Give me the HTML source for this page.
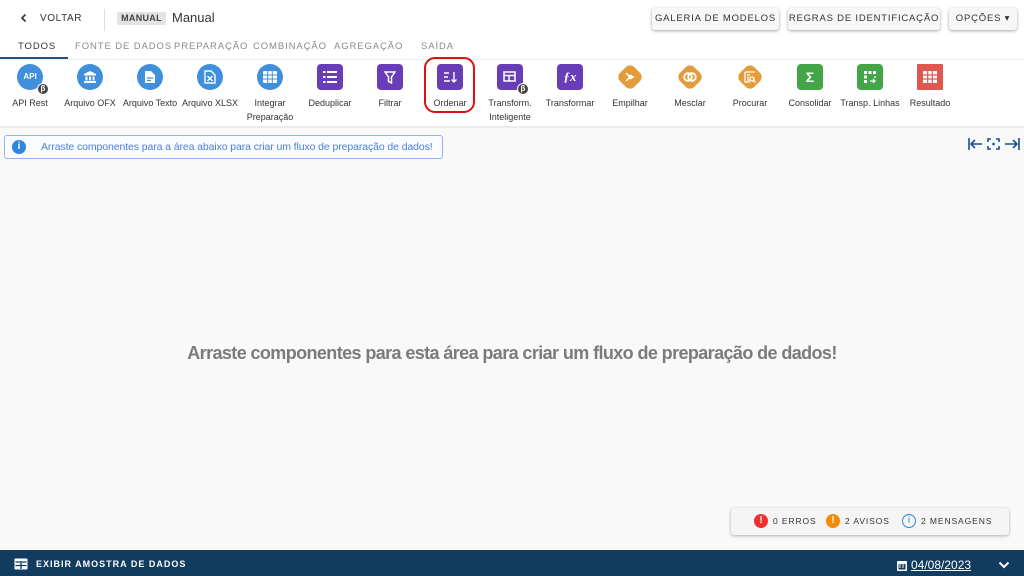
<!DOCTYPE html>
<html><head><meta charset="utf-8"><style>
*{margin:0;padding:0;box-sizing:border-box}
body{width:1024px;height:576px;overflow:hidden;background:#f9f9f9;font-family:"Liberation Sans",sans-serif;position:relative;color:#333}
.top{position:absolute;left:0;top:0;width:1024px;height:128px;background:#fff;border-bottom:2px solid #ececec}
.abs{position:absolute;white-space:nowrap}
.btn{position:absolute;top:8px;height:22px;background:#f7f7f7;box-shadow:0 1px 3px rgba(0,0,0,.35);border-radius:3px;font-size:9.5px;letter-spacing:.8px;color:#333;line-height:22px;text-align:center;white-space:nowrap}
.tab{position:absolute;top:41px;font-size:9.5px;letter-spacing:.9px;color:#8a8a8a;white-space:nowrap}
.it{position:absolute;top:63px;width:70px;margin-left:-35px;text-align:center;font-size:9px;color:#333;line-height:14px;white-space:nowrap}
.ic{width:26px;height:26px;margin:1px auto 6px;position:relative;display:flex;align-items:center;justify-content:center;color:#fff;font-weight:bold;font-size:12px}
.b{background:#3f8fdc;border-radius:50%}
.p{background:#6a3db8;border-radius:4px}
.g{background:#44a548;border-radius:4px}
.r{background:#e0574f;border-radius:1px}
.o{background:transparent}
.o:before{content:"";position:absolute;left:3px;top:3px;width:20px;height:20px;background:#e49c3a;border-radius:6px;transform:rotate(45deg)}
.o svg{position:relative}
.beta{position:absolute;right:-6px;bottom:-5px;width:12px;height:12px;border-radius:50%;background:#444;border:1px solid #fff;font-size:8px;line-height:10px;color:#fff;text-align:center;font-weight:bold}
</style></head><body>
<div class="top">
 <svg class="abs" style="left:19px;top:13px" width="10" height="10" viewBox="0 0 10 10"><path d="M6.5 1.5L3 5l3.5 3.5" stroke="#333" stroke-width="1.6" fill="none"/></svg>
 <div class="abs" style="left:40px;top:13px;font-size:10px;letter-spacing:.6px;color:#333">VOLTAR</div>
 <div class="abs" style="left:104px;top:9px;width:1px;height:22px;background:#ddd"></div>
 <div class="abs" style="left:117px;top:12px;width:49px;height:13px;background:#e3e3e3;border-radius:2px;font-size:9px;font-weight:bold;color:#444;text-align:center;line-height:13px;letter-spacing:.3px">MANUAL</div>
 <div class="abs" style="left:172px;top:10px;font-size:13px;color:#333">Manual</div>
 <div class="btn" style="left:652px;width:127px">GALERIA DE MODELOS</div>
 <div class="btn" style="left:788px;width:152px">REGRAS DE IDENTIFICAÇÃO</div>
 <div class="btn" style="left:949px;width:68px">OPÇÕES ▾</div>
 <div class="tab" style="left:18px;color:#333">TODOS</div>
 <div class="abs" style="left:0;top:57px;width:68px;height:2px;background:#2a4f7a"></div>
 <div class="tab" style="left:75px">FONTE DE DADOS</div>
 <div class="tab" style="left:174px">PREPARAÇÃO</div>
 <div class="tab" style="left:253px">COMBINAÇÃO</div>
 <div class="tab" style="left:334px">AGREGAÇÃO</div>
 <div class="tab" style="left:421px">SAÍDA</div>
 <div class="abs" style="left:0;top:59px;width:1024px;height:1px;background:#eee"></div>

 <div class="it" style="left:30px"><div class="ic b" style="font-size:8px">API<span class="beta">β</span></div>API Rest</div>
 <div class="it" style="left:90px"><div class="ic b"><svg width="14" height="14" viewBox="0 0 14 14" fill="#fff"><path d="M7 1L1 4v1.5h12V4z"/><rect x="2.5" y="6.5" width="2" height="4"/><rect x="6" y="6.5" width="2" height="4"/><rect x="9.5" y="6.5" width="2" height="4"/><rect x="1" y="11" width="12" height="2"/></svg></div>Arquivo OFX</div>
 <div class="it" style="left:150px"><div class="ic b"><svg width="12" height="14" viewBox="0 0 12 14"><path d="M1 1h6l4 4v8H1z" fill="#fff"/><path d="M3 8h6M3 10.5h4" stroke="#3f8fdc" stroke-width="1.3"/></svg></div>Arquivo Texto</div>
 <div class="it" style="left:210px"><div class="ic b"><svg width="12" height="14" viewBox="0 0 12 14"><path d="M1 1h6l4 4v8H1z" fill="none" stroke="#fff" stroke-width="1.4"/><path d="M3.5 6l5 5M8.5 6l-5 5" stroke="#fff" stroke-width="1.4"/></svg></div>Arquivo XLSX</div>
 <div class="it" style="left:270px"><div class="ic b"><svg width="14" height="12" viewBox="0 0 14 12" fill="#fff"><rect x="0" y="0" width="14" height="12" rx="1"/><path d="M0 4h14M0 8h14M4.7 0v12M9.3 0v12" stroke="#3f8fdc" stroke-width="1"/></svg></div>Integrar<br>Preparação</div>
 <div class="it" style="left:330px"><div class="ic p"><svg width="14" height="12" viewBox="0 0 14 12" fill="#fff"><rect x="0" y="0" width="2.5" height="2"/><rect x="4" y="0" width="10" height="2"/><rect x="0" y="5" width="2.5" height="2"/><rect x="4" y="5" width="10" height="2"/><rect x="0" y="10" width="2.5" height="2"/><rect x="4" y="10" width="10" height="2"/></svg></div>Deduplicar</div>
 <div class="it" style="left:390px"><div class="ic p"><svg width="12" height="13" viewBox="0 0 12 13"><path d="M1 1h10L7.5 6v6l-3-1.5V6z" fill="none" stroke="#fff" stroke-width="1.5"/></svg></div>Filtrar</div>
 <div class="it" style="left:450px"><div class="ic p"><svg width="14" height="12" viewBox="0 0 14 12" fill="none" stroke="#fff" stroke-width="1.4"><path d="M1 2h5M1 6h4M1 10h6M11 1v10M8.5 8.5L11 11l2.5-2.5"/></svg></div>Ordenar</div>
 <div class="abs" style="left:424px;top:57px;width:51px;height:56px;border:2px solid #e01010;border-radius:11px"></div>
 <div class="it" style="left:510px"><div class="ic p"><svg width="14" height="12" viewBox="0 0 14 12" fill="none" stroke="#fff" stroke-width="1.5"><rect x="1" y="1" width="11" height="9"/><path d="M1 4.5h11M6 4.5V10"/></svg><span class="beta">β</span></div>Transform.<br>Inteligente</div>
 <div class="it" style="left:570px"><div class="ic p" style="font-style:italic;font-family:'Liberation Serif',serif;font-size:13px">ƒx</div>Transformar</div>
 <div class="it" style="left:630px"><div class="ic o"><svg width="12" height="12" viewBox="0 0 12 12" fill="none" stroke="#fff" stroke-width="1.5"><path d="M2 2l4 4-4 4M6 6h4"/><circle cx="6.5" cy="6" r="1.5" fill="#fff"/></svg></div>Empilhar</div>
 <div class="it" style="left:690px"><div class="ic o"><svg width="14" height="10" viewBox="0 0 14 10" fill="none" stroke="#fff" stroke-width="1.8"><circle cx="5" cy="5" r="3.8"/><circle cx="9" cy="5" r="3.8"/></svg></div>Mesclar</div>
 <div class="it" style="left:750px"><div class="ic o"><svg width="12" height="12" viewBox="0 0 12 12" fill="none" stroke="#fff" stroke-width="1.3"><path d="M1 1h10M1 1v10h5M3 4h3M3 6.5h2M3 9h3"/><circle cx="8" cy="8" r="2"/><path d="M9.5 9.5l2 2"/></svg></div>Procurar</div>
 <div class="it" style="left:810px"><div class="ic g" style="font-size:14px">Σ</div>Consolidar</div>
 <div class="it" style="left:870px"><div class="ic g"><svg width="14" height="14" viewBox="0 0 14 14" fill="#fff"><rect x="1" y="1" width="3" height="3"/><rect x="5.5" y="1" width="3" height="3"/><rect x="10" y="1" width="3" height="3"/><rect x="1" y="5.5" width="3" height="3"/><rect x="1" y="10" width="3" height="3"/><path d="M7 11h5M10 9l2 2-2 2M12 8V6" stroke="#fff" stroke-width="1.2" fill="none"/></svg></div>Transp. Linhas</div>
 <div class="it" style="left:930px"><div class="ic r"><svg width="14" height="12" viewBox="0 0 14 12" fill="#fff"><rect x="0" y="0" width="14" height="12"/><path d="M0 4h14M0 8h14M4.7 0v12M9.3 0v12" stroke="#e0574f" stroke-width="1.2"/></svg></div>Resultado</div>
</div>

<div class="abs" style="left:4px;top:135px;width:439px;height:24px;border:1px solid #8ab8ec;border-radius:3px;background:#fafcff"></div>
<div class="abs" style="left:12px;top:140px;width:14px;height:14px;border-radius:50%;background:#2e86e0;color:#fff;font-size:10px;font-weight:bold;text-align:center;line-height:14px">i</div>
<div class="abs" style="left:41px;top:141px;font-size:10.5px;color:#4a7fd8;letter-spacing:-.1px">Arraste componentes para a área abaixo para criar um fluxo de preparação de dados!</div>
<svg class="abs" style="left:967px;top:136px" width="54" height="16" viewBox="0 0 54 16" fill="none" stroke="#1b4f8c" stroke-width="1.6"><path d="M2 2v12M4 8h11M8 4L4 8l4 4"/><path d="M21 6V3h3M29 3h3v3M32 10v3h-3M24 13h-3v-3"/><circle cx="26.5" cy="8" r="1.3" fill="#1b4f8c" stroke="none"/><path d="M52 2v12M38 8h12M46 4l4 4-4 4"/></svg>

<div class="abs" style="left:186px;top:343px;width:652px;text-align:center;font-size:18px;font-weight:bold;color:#7b7b7b;letter-spacing:-.6px">Arraste componentes para esta área para criar um fluxo de preparação de dados!</div>

<div class="abs" style="left:731px;top:508px;width:278px;height:27px;background:#f5f5f5;box-shadow:0 1px 3px rgba(0,0,0,.3);border-radius:3px"></div>
<div class="abs" style="left:754px;top:514px;width:14px;height:14px;border-radius:50%;background:#f0302f;color:#fff;font-size:10px;font-weight:bold;text-align:center;line-height:14px">!</div>
<div class="abs" style="left:773px;top:516px;font-size:8.5px;letter-spacing:.9px;color:#333">0 ERROS</div>
<div class="abs" style="left:826px;top:514px;width:14px;height:14px;border-radius:50%;background:#f58a0a;color:#fff;font-size:10px;font-weight:bold;text-align:center;line-height:14px">!</div>
<div class="abs" style="left:845px;top:516px;font-size:8.5px;letter-spacing:.9px;color:#333">2 AVISOS</div>
<div class="abs" style="left:902px;top:514px;width:14px;height:14px;border-radius:50%;border:1.3px solid #2e86e0;color:#2e86e0;font-size:10px;text-align:center;line-height:12px">i</div>
<div class="abs" style="left:921px;top:516px;font-size:8.5px;letter-spacing:.9px;color:#333">2 MENSAGENS</div>

<div class="abs" style="left:0;top:550px;width:1024px;height:26px;background:#123b60"></div>
<svg class="abs" style="left:14px;top:558px" width="14" height="12" viewBox="0 0 14 12"><rect x="0.5" y="0.5" width="13" height="11" rx="1" fill="#fff"/><path d="M1.5 4h11M7 4v7M1.5 7.5h11" stroke="#123b60" stroke-width="1.3"/></svg>
<div class="abs" style="left:36px;top:559px;font-size:9px;font-weight:bold;letter-spacing:1px;color:#fff">EXIBIR AMOSTRA DE DADOS</div>
<svg class="abs" style="left:897px;top:560px" width="10" height="11" viewBox="0 0 10 11" fill="#fff"><rect x="0" y="1" width="10" height="10" rx="1"/><rect x="1.5" y="4" width="7" height="5.5" fill="#123b60"/><path d="M2 5h2M5 5h2M2 7h2M5 7h2" stroke="#fff"/></svg>
<div class="abs" style="left:911px;top:558px;font-size:12px;color:#fff;text-decoration:underline">04/08/2023</div>
<svg class="abs" style="left:998px;top:561px" width="12" height="8" viewBox="0 0 12 8"><path d="M1.5 1.5L6 6l4.5-4.5" stroke="#fff" stroke-width="2" fill="none"/></svg>
</body></html>
